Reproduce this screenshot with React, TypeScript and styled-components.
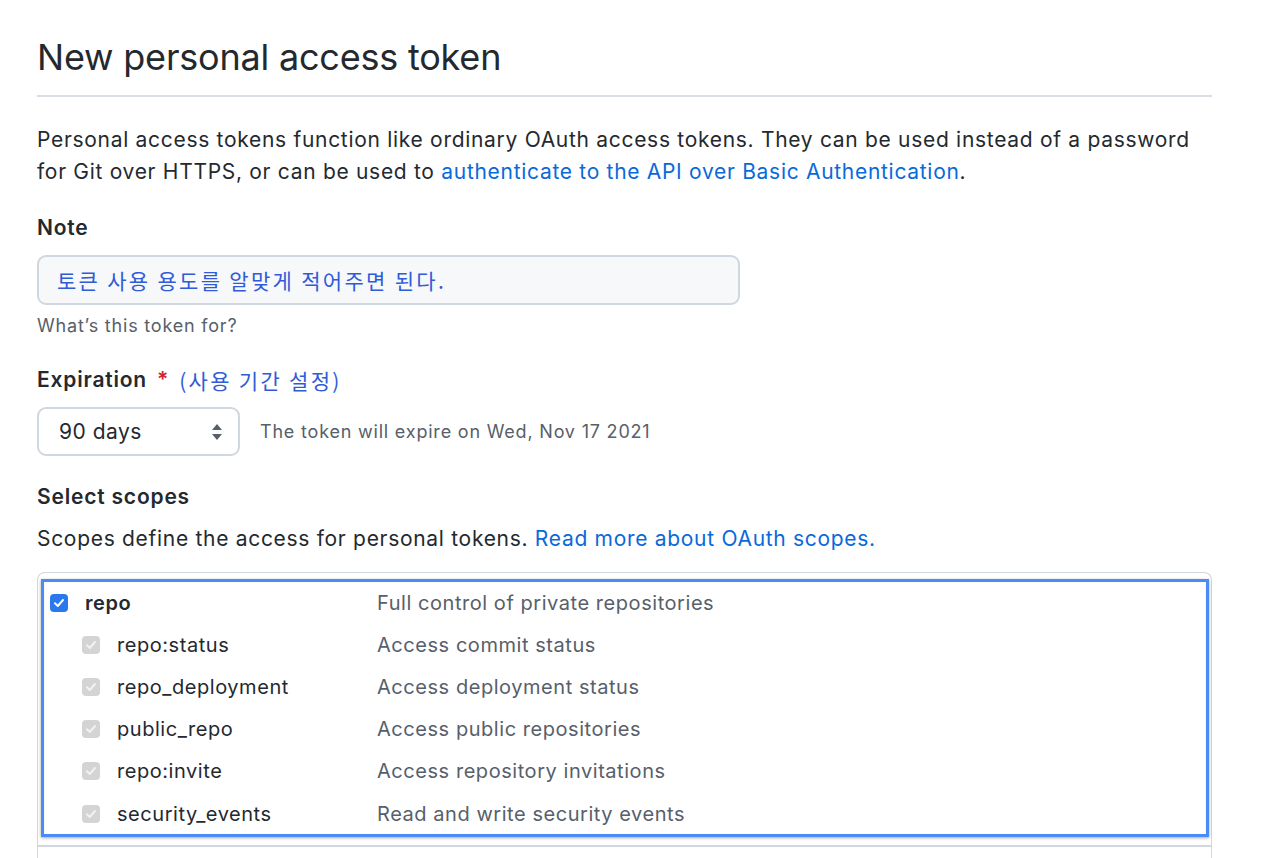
import styled, { createGlobalStyle } from 'styled-components'

const GlobalStyle = createGlobalStyle`
  body {
    margin: 0;
    background: #ffffff;
    color: #24292f;
    font-family: Inter, "Noto Sans CJK KR", sans-serif;
  }
`

const Page = styled.div`
  width: 1175px;
  margin-left: 37px;
  padding-top: 33px;
`

const Title = styled.h1`
  margin: 0;
  font-size: 36px;
  line-height: 48px;
  font-weight: 400;
  letter-spacing: -0.2px;
  padding-bottom: 14px;
  border-bottom: 2px solid #d8dee4;
`

const Intro = styled.p<{ $top: number }>`
  margin: ${p => p.$top}px 0 0;
  font-size: 21px;
  line-height: 32px;
  letter-spacing: 0.7px;
  white-space: nowrap;
`

const Link = styled.a`
  color: #0969da;
  text-decoration: none;
`

const Label = styled.div<{ $top: number }>`
  margin-top: ${p => p.$top}px;
  font-size: 21px;
  line-height: 30px;
  font-weight: 600;
  letter-spacing: 0.8px;
  display: flex;
  align-items: center;
  gap: 10px;
`

const Required = styled.span`
  color: #cf222e;
`

const Annotation = styled.span`
  color: #2f5bd8;
  font-weight: 400;
  font-family: "Noto Sans CJK KR", Inter, sans-serif;
  letter-spacing: 2.3px;
`

const NoteInput = styled.div`
  margin-top: 12px;
  width: 703px;
  height: 50px;
  box-sizing: border-box;
  border: 2px solid #d0d7de;
  border-radius: 9px;
  background: #f6f8fa;
  padding-left: 18px;
  display: flex;
  align-items: center;
  font-family: "Noto Sans CJK KR", sans-serif;
  font-size: 21px;
  letter-spacing: 2.3px;
  color: #2f5bd8;
`

const Hint = styled.div`
  margin-top: 9px;
  font-size: 18px;
  line-height: 24px;
  letter-spacing: 0.8px;
  color: #57606a;
`

const ExpireRow = styled.div`
  margin-top: 12px;
  display: flex;
  align-items: center;
  gap: 20px;
`

const Select = styled.div`
  width: 203px;
  height: 49px;
  box-sizing: border-box;
  border: 2px solid #d0d7de;
  border-radius: 9px;
  padding: 0 15px 0 20px;
  display: flex;
  align-items: center;
  justify-content: space-between;
  font-size: 21px;
  letter-spacing: 0.5px;
  color: #24292f;
`

const Muted = styled.span`
  font-size: 18px;
  letter-spacing: 0.8px;
  color: #57606a;
`

const ScopeBox = styled.div`
  margin-top: 17px;
  border: 1px solid #d0d7de;
  border-bottom: none;
  border-radius: 8px 8px 0 0;
  height: 286px;
`

const ScopeGroup = styled.div`
  position: relative;
  padding: 9px 0;
  border-bottom: 2px solid #d0d7de;
`

const Highlight = styled.div`
  position: absolute;
  top: 6px;
  left: 3px;
  right: 2px;
  bottom: 8px;
  border: 3px solid #4b8bf5;
  box-shadow: 0 1px 3px rgba(0, 0, 0, 0.35), inset 0 0 1px rgba(0, 0, 0, 0.2);
  pointer-events: none;
`

const ScopeRow = styled.div<{ $tall?: boolean }>`
  display: flex;
  align-items: center;
  height: ${p => (p.$tall ? 44 : 42)}px;
  padding-left: 12px;
  font-size: 20px;
  letter-spacing: 0.55px;
`

const ScopeName = styled.div<{ $child?: boolean }>`
  display: flex;
  align-items: center;
  gap: 17px;
  width: 327px;
  padding-left: ${p => (p.$child ? 32 : 0)}px;
  box-sizing: border-box;
  font-weight: ${p => (p.$child ? 400 : 600)};
  color: #24292f;
`

const Box = styled.span<{ $disabled?: boolean }>`
  width: 18px;
  height: 18px;
  border-radius: 4px;
  background: ${p => (p.$disabled ? '#d4d4d4' : '#2a78ee')};
  display: inline-flex;
  align-items: center;
  justify-content: center;
  flex-shrink: 0;
`

const ScopeDesc = styled.div`
  color: #57606a;
`

const Check = ({ disabled }: { disabled?: boolean }) => (
  <Box $disabled={disabled}>
    <svg width="12" height="12" viewBox="0 0 12 12">
      <path d="M2 6.3 L4.8 9 L10 3" fill="none" stroke={disabled ? '#f2f2f2' : '#fff'} strokeWidth="2" strokeLinecap="round" strokeLinejoin="round" />
    </svg>
  </Box>
)

const scopes = [
  { name: 'repo:status', desc: 'Access commit status' },
  { name: 'repo_deployment', desc: 'Access deployment status' },
  { name: 'public_repo', desc: 'Access public repositories' },
  { name: 'repo:invite', desc: 'Access repository invitations' },
  { name: 'security_events', desc: 'Read and write security events' },
]

const App = () => {
  return (
    <>
      <GlobalStyle />
      <Page>
        <Title>New personal access token</Title>
        <Intro $top={27}>
          Personal access tokens function like ordinary OAuth access tokens. They can be used instead of a password
          <br />
          for Git over HTTPS, or can be used to <Link>authenticate to the API over Basic Authentication</Link>.
        </Intro>

        <Label $top={25}>Note</Label>
        <NoteInput>토큰 사용 용도를 알맞게 적어주면 된다.</NoteInput>
        <Hint>What’s this token for?</Hint>

        <Label $top={27}>
          Expiration <Required>*</Required>
          <Annotation>(사용 기간 설정)</Annotation>
        </Label>
        <ExpireRow>
          <Select>
            90 days
            <svg width="12" height="18" viewBox="0 0 12 18">
              <path d="M6 1 L11 7 H1 Z M6 17 L11 11 H1 Z" fill="#57606a" />
            </svg>
          </Select>
          <Muted>The token will expire on Wed, Nov 17 2021</Muted>
        </ExpireRow>

        <Label $top={26}>Select scopes</Label>
        <Intro $top={11}>
          Scopes define the access for personal tokens. <Link>Read more about OAuth scopes.</Link>
        </Intro>

        <ScopeBox>
          <ScopeGroup>
            <ScopeRow>
              <ScopeName>
                <Check />
                repo
              </ScopeName>
              <ScopeDesc>Full control of private repositories</ScopeDesc>
            </ScopeRow>
            {scopes.map((s, i) => (
              <ScopeRow key={s.name} $tall={i === scopes.length - 1}>
                <ScopeName $child>
                  <Check disabled />
                  {s.name}
                </ScopeName>
                <ScopeDesc>{s.desc}</ScopeDesc>
              </ScopeRow>
            ))}
            <Highlight />
          </ScopeGroup>
        </ScopeBox>
      </Page>
    </>
  )
}

export default App
